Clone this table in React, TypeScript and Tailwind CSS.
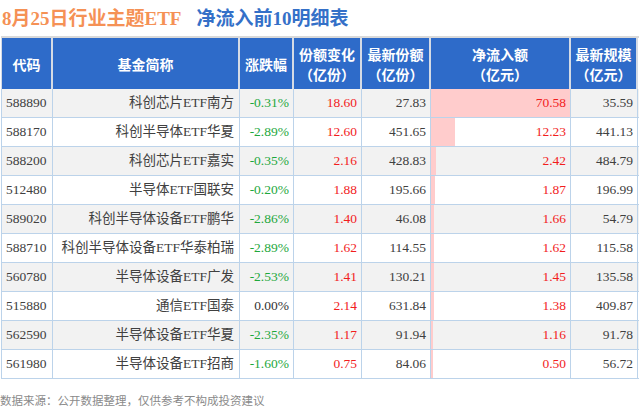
import React from 'react';

type Row = {
  code: string;
  name: string;
  pct: string;
  shareChg: string;
  shares: string;
  inflow: number;
  scale: string;
};

const rows: Row[] = [
  { code: '588890', name: '科创芯片ETF南方', pct: '-0.31%', shareChg: '18.60', shares: '27.83', inflow: 70.58, scale: '35.59' },
  { code: '588170', name: '科创半导体ETF华夏', pct: '-2.89%', shareChg: '12.60', shares: '451.65', inflow: 12.23, scale: '441.13' },
  { code: '588200', name: '科创芯片ETF嘉实', pct: '-0.35%', shareChg: '2.16', shares: '428.83', inflow: 2.42, scale: '484.79' },
  { code: '512480', name: '半导体ETF国联安', pct: '-0.20%', shareChg: '1.88', shares: '195.66', inflow: 1.87, scale: '196.99' },
  { code: '589020', name: '科创半导体设备ETF鹏华', pct: '-2.86%', shareChg: '1.40', shares: '46.08', inflow: 1.66, scale: '54.79' },
  { code: '588710', name: '科创半导体设备ETF华泰柏瑞', pct: '-2.89%', shareChg: '1.62', shares: '114.55', inflow: 1.62, scale: '115.58' },
  { code: '560780', name: '半导体设备ETF广发', pct: '-2.53%', shareChg: '1.41', shares: '130.21', inflow: 1.45, scale: '135.58' },
  { code: '515880', name: '通信ETF国泰', pct: '0.00%', shareChg: '2.14', shares: '631.84', inflow: 1.38, scale: '409.87' },
  { code: '562590', name: '半导体设备ETF华夏', pct: '-2.35%', shareChg: '1.17', shares: '91.94', inflow: 1.16, scale: '91.78' },
  { code: '561980', name: '半导体设备ETF招商', pct: '-1.60%', shareChg: '0.75', shares: '84.06', inflow: 0.5, scale: '56.72' },
];

const cols = 'grid grid-cols-[51px_187px_54px_68px_69px_140px_67px]';
const MAX_INFLOW = 70.58;

const pctColor = (p: string) => (p.startsWith('-') ? 'text-[#1ea83c]' : 'text-[#333]');

// header cell: blue fill with a light 2px divider on its right
const th = 'flex flex-col items-center justify-center bg-[#2e6bc9] border-r-2 border-[#d5dbe5]';

export default function App() {
  return (
    <div className="relative h-[410px] w-[640px] overflow-hidden bg-white font-['Liberation_Serif','Noto_Sans_CJK_SC',serif]">
      <div className="flex h-[36px] items-center pl-[2px] text-[19px] font-bold leading-none">
        <span className="text-[#f59155]">8月25日行业主题ETF</span>
        <span className="ml-[15px] text-[#3470c8]">净流入前10明细表</span>
      </div>

      <div className="ml-[1px] w-[638px] border-t-2 border-[#d9d9d9]">
        <div className={`${cols} h-[51px] border-l border-[#d5dbe5] font-['Noto_Sans_CJK_SC',sans-serif] text-[14px] font-bold leading-[20px] text-white`}>
          <div className={th}>代码</div>
          <div className={th}>基金简称</div>
          <div className={th}>涨跌幅</div>
          <div className={th}>
            <span>份额变化</span>
            <span>（亿份）</span>
          </div>
          <div className={th}>
            <span>最新份额</span>
            <span>（亿份）</span>
          </div>
          <div className={th}>
            <span>净流入额</span>
            <span>（亿元）</span>
          </div>
          <div className={th}>
            <span>最新规模</span>
            <span>（亿元）</span>
          </div>
        </div>

        <div className="border-l border-[#bcd3ea] text-[13.5px] text-[#404040]">
          {rows.map((r, i) => (
            <div
              key={r.code}
              className={`${cols} h-[29px] border-b border-[#bcd3ea] ${i % 2 === 0 ? 'bg-[#f2f2f2]' : 'bg-white'}`}
            >
              <div className="flex items-center border-r border-[#bcd3ea] pl-[4px]">{r.code}</div>
              <div className="flex items-center justify-end border-r border-[#bcd3ea] pr-[5px]">{r.name}</div>
              <div className={`flex items-center justify-end border-r border-[#bcd3ea] pr-[4px] ${pctColor(r.pct)}`}>{r.pct}</div>
              <div className="flex items-center justify-end border-r border-[#bcd3ea] pr-[4px] text-[#f21d1d]">{r.shareChg}</div>
              <div className="flex items-center justify-end border-r border-[#bcd3ea] pr-[4px]">{r.shares}</div>
              <div className="relative flex items-center justify-end border-r border-[#bcd3ea] pr-[4px] text-[#f21d1d]">
                <div
                  className="absolute inset-y-0 left-0 bg-[#ffcccc]"
                  style={{ width: `${Math.max(2, (r.inflow / MAX_INFLOW) * 139)}px` }}
                />
                <span className="relative">{r.inflow.toFixed(2)}</span>
              </div>
              <div className="flex items-center justify-end border-r border-[#bcd3ea] pr-[4px]">{r.scale}</div>
            </div>
          ))}
        </div>
      </div>

      <div className="mt-[16px] font-['Noto_Sans_CJK_SC',sans-serif] text-[11.5px] leading-none text-[#8a8a8a]">
        数据来源：公开数据整理，仅供参考不构成投资建议
      </div>
    </div>
  );
}
